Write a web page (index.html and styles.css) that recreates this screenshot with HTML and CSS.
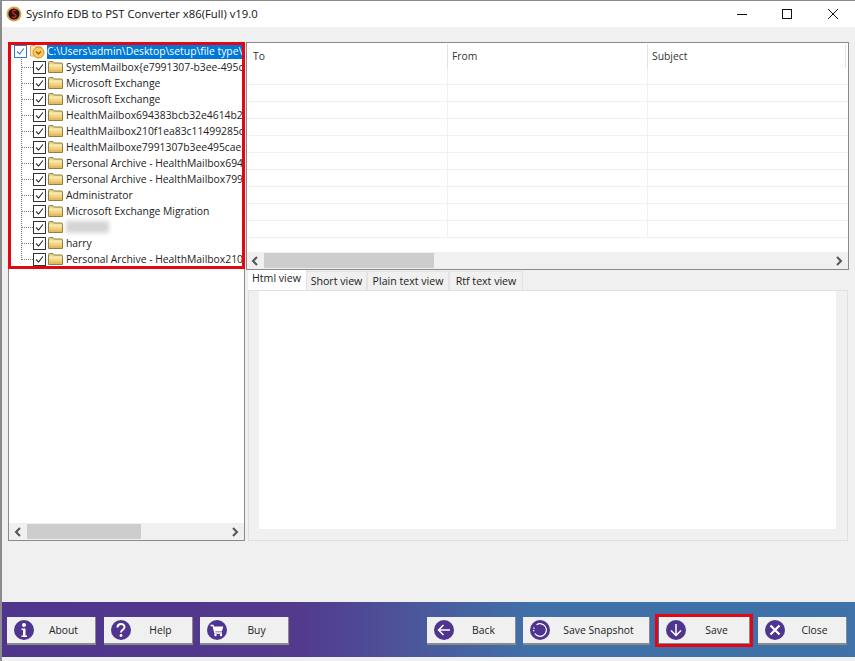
FILE: index.html
```html
<!DOCTYPE html>
<html lang="en">
<head>
<meta charset="utf-8">
<title>SysInfo EDB to PST Converter</title>
<link rel="stylesheet" href="styles.css">
</head>
<body>
<svg class="defs" width="0" height="0" aria-hidden="true">
  <defs>
    <linearGradient id="folder-fill" x1="0" y1="0" x2="0" y2="1"><stop offset="0" stop-color="#fdf1b8"/><stop offset="1" stop-color="#e4b44a"/></linearGradient>
    <symbol id="tick" viewBox="0 0 13 13"><path d="M2.500 6.500l3 3 5-6.500" fill="none" stroke="#222" stroke-width="1.300"/></symbol>
    <symbol id="folder" viewBox="0 0 15 12"><path d="M.5 11.500V1.500q0-1 1-1h3.500l1.500 1.500h7q1 0 1 1v8.500z" fill="#e9cf86" stroke="#8f8150"/><path d="M1 3.500h13v7.500H1z" fill="url(#folder-fill)"/></symbol>
  </defs>
</svg>
<div class="window">
  <header class="titlebar">
    <svg class="app-icon" viewBox="0 0 16 16"><circle cx="8" cy="8" r="7.500" fill="#d2a548"/><circle cx="8" cy="8" r="5.600" fill="#241210"/><path d="M10.400 4.800C8.600 3.800 6.200 4.600 6.600 6.400c.4 1.700 3.400 1.600 3.400 3.400 0 1.600-2 2-3.800 1.200" fill="none" stroke="#c8232c" stroke-width="1.500"/></svg>
    <span class="title">SysInfo EDB to PST Converter x86(Full) v19.0</span>
    <div class="win-controls">
      <svg class="win-btn" viewBox="0 0 46 26"><path d="M22 13.500h10" stroke="#111" fill="none"/></svg>
      <svg class="win-btn" viewBox="0 0 46 26"><rect x="21.500" y="8.500" width="9" height="9" stroke="#111" fill="none"/></svg>
      <svg class="win-btn" viewBox="0 0 46 26"><path d="M21 8l10 10M31 8L21 18" stroke="#111" fill="none"/></svg>
    </div>
  </header>
  <main class="workspace">
    <section class="tree-pane">
      <div class="tree-highlight"></div>
      <div class="tree">
        <div class="tree-root">
          <span class="check check-root"><svg viewBox="0 0 13 13"><path d="M2.500 6.500l3 3 5-6.500" fill="none" stroke="#2b7cc4" stroke-width="1.300"/></svg></span>
          <svg class="root-icon" viewBox="0 0 16 16"><path d="M1.500 13V4q0-1.500 1.500-1.500h3l1.500 1.500h5v9z" fill="#fbe6b4" stroke="#d9a95a"/><circle cx="9.500" cy="9.500" r="5.500" fill="#f8c85a" stroke="#d98c22"/><path d="M7 8.500l2.500 2.500 2.500-2.500" fill="none" stroke="#8a5a10" stroke-width="1.200"/></svg>
          <span class="root-label">C:\Users\admin\Desktop\setup\file type\</span>
        </div>
        <ul class="tree-list">
          <li class="tree-row"><span class="check"><svg viewBox="0 0 13 13"><use href="#tick"/></svg></span><svg class="folder"><use href="#folder"/></svg><span class="label">SystemMailbox{e7991307-b3ee-495c</span></li>
          <li class="tree-row"><span class="check"><svg viewBox="0 0 13 13"><use href="#tick"/></svg></span><svg class="folder"><use href="#folder"/></svg><span class="label">Microsoft Exchange</span></li>
          <li class="tree-row"><span class="check"><svg viewBox="0 0 13 13"><use href="#tick"/></svg></span><svg class="folder"><use href="#folder"/></svg><span class="label">Microsoft Exchange</span></li>
          <li class="tree-row"><span class="check"><svg viewBox="0 0 13 13"><use href="#tick"/></svg></span><svg class="folder"><use href="#folder"/></svg><span class="label">HealthMailbox694383bcb32e4614b2f</span></li>
          <li class="tree-row"><span class="check"><svg viewBox="0 0 13 13"><use href="#tick"/></svg></span><svg class="folder"><use href="#folder"/></svg><span class="label">HealthMailbox210f1ea83c11499285c</span></li>
          <li class="tree-row"><span class="check"><svg viewBox="0 0 13 13"><use href="#tick"/></svg></span><svg class="folder"><use href="#folder"/></svg><span class="label">HealthMailboxe7991307b3ee495caea</span></li>
          <li class="tree-row"><span class="check"><svg viewBox="0 0 13 13"><use href="#tick"/></svg></span><svg class="folder"><use href="#folder"/></svg><span class="label">Personal Archive - HealthMailbox694</span></li>
          <li class="tree-row"><span class="check"><svg viewBox="0 0 13 13"><use href="#tick"/></svg></span><svg class="folder"><use href="#folder"/></svg><span class="label">Personal Archive - HealthMailbox799</span></li>
          <li class="tree-row"><span class="check"><svg viewBox="0 0 13 13"><use href="#tick"/></svg></span><svg class="folder"><use href="#folder"/></svg><span class="label">Administrator</span></li>
          <li class="tree-row"><span class="check"><svg viewBox="0 0 13 13"><use href="#tick"/></svg></span><svg class="folder"><use href="#folder"/></svg><span class="label">Microsoft Exchange Migration</span></li>
          <li class="tree-row"><span class="check"><svg viewBox="0 0 13 13"><use href="#tick"/></svg></span><svg class="folder"><use href="#folder"/></svg><span class="blurred"></span></li>
          <li class="tree-row"><span class="check"><svg viewBox="0 0 13 13"><use href="#tick"/></svg></span><svg class="folder"><use href="#folder"/></svg><span class="label">harry</span></li>
          <li class="tree-row"><span class="check"><svg viewBox="0 0 13 13"><use href="#tick"/></svg></span><svg class="folder"><use href="#folder"/></svg><span class="label">Personal Archive - HealthMailbox210</span></li>
        </ul>
      </div>
      <div class="scrollbar tree-scroll">
        <svg class="arrow" viewBox="0 0 8 10"><path d="M6 1L2 5l4 4" fill="none" stroke="#555" stroke-width="2"/></svg>
        <div class="track"><div class="thumb thumb-tree"></div></div>
        <svg class="arrow" viewBox="0 0 8 10"><path d="M2 1l4 4-4 4" fill="none" stroke="#555" stroke-width="2"/></svg>
      </div>
    </section>
    <section class="right-pane">
      <div class="mail-list">
        <div class="mail-table">
          <div class="mail-header"><span class="col col-to">To</span><span class="col col-from">From</span><span class="col col-subject">Subject</span></div>
          <div class="mail-row"></div><div class="mail-row"></div><div class="mail-row"></div><div class="mail-row"></div><div class="mail-row"></div><div class="mail-row"></div><div class="mail-row"></div><div class="mail-row"></div><div class="mail-row"></div><div class="mail-row"></div>
        </div>
        <div class="scrollbar list-scroll">
          <svg class="arrow" viewBox="0 0 8 10"><path d="M6 1L2 5l4 4" fill="none" stroke="#555" stroke-width="2"/></svg>
          <div class="track"><div class="thumb thumb-list"></div></div>
          <svg class="arrow" viewBox="0 0 8 10"><path d="M2 1l4 4-4 4" fill="none" stroke="#555" stroke-width="2"/></svg>
        </div>
      </div>
      <nav class="tabs">
        <span class="tab tab-active">Html view</span>
        <span class="tab tab-short">Short view</span>
        <span class="tab tab-plain">Plain text view</span>
        <span class="tab tab-rtf">Rtf text view</span>
      </nav>
      <div class="tab-panel"><div class="preview"></div></div>
    </section>
  </main>
  <footer class="action-bar">
    <div class="btn-group">
      <button class="btn"><svg class="btn-icon" viewBox="0 0 20 20"><circle cx="10" cy="10" r="10" fill="#4f3590"/><circle cx="10" cy="5" r="2" fill="#fff"/><path d="M7.500 8.500h4v7h1.500v1.500H7.500v-1.500H9v-5.500H7.500z" fill="#fff"/></svg><span class="btn-label">About</span></button>
      <button class="btn btn-help"><svg class="btn-icon" viewBox="0 0 20 20"><circle cx="10" cy="10" r="10" fill="#4f3590"/><path d="M6.500 7.500C6.500 3 13.500 3 13.500 7c0 2.800-3.500 2.800-3.500 5.500" fill="none" stroke="#fff" stroke-width="2"/><circle cx="10" cy="15.500" r="1.400" fill="#fff"/></svg><span class="btn-label">Help</span></button>
      <button class="btn"><svg class="btn-icon" viewBox="0 0 20 20"><circle cx="10" cy="10" r="10" fill="#4f3590"/><path d="M3.500 5.500h2.500l2 7.500h7" fill="none" stroke="#fff" stroke-width="1.300"/><path d="M6.300 6.500h10l-1.500 5H7.600z" fill="#fff"/><circle cx="8.500" cy="15" r="1.200" fill="#fff"/><circle cx="14" cy="15" r="1.200" fill="#fff"/></svg><span class="btn-label">Buy</span></button>
    </div>
    <div class="btn-group">
      <button class="btn"><svg class="btn-icon" viewBox="0 0 20 20"><circle cx="10" cy="10" r="10" fill="#4f3590"/><path d="M16 10H4.500M9.500 5l-5 5 5 5" fill="none" stroke="#fff" stroke-width="1.500"/></svg><span class="btn-label">Back</span></button>
      <button class="btn btn-snapshot"><svg class="btn-icon" viewBox="0 0 20 20"><circle cx="10" cy="10" r="10" fill="#4f3590"/><path d="M6.500 4.800A6.300 6.300 0 1 1 4.800 13.500" fill="none" stroke="#fff" stroke-width="1.200"/><path d="M4.200 7.500a6.300 6.300 0 0 0-.4 4" fill="none" stroke="#fff" stroke-width="1.200" stroke-dasharray="1.500 1"/></svg><span class="btn-label">Save Snapshot</span></button>
      <button class="btn btn-save"><svg class="btn-icon" viewBox="0 0 20 20"><circle cx="10" cy="10" r="10" fill="#4f3590"/><path d="M10 4v11.500M5 10.500l5 5 5-5" fill="none" stroke="#fff" stroke-width="1.500"/></svg><span class="btn-label">Save</span></button>
      <button class="btn"><svg class="btn-icon" viewBox="0 0 20 20"><circle cx="10" cy="10" r="10" fill="#4f3590"/><path d="M5.500 5.500l9 9M14.500 5.500l-9 9" fill="none" stroke="#fff" stroke-width="2.200"/></svg><span class="btn-label">Close</span></button>
    </div>
  </footer>
</div>
</body>
</html>
```
FILE: styles.css
```css
* { box-sizing: border-box; }
html, body { margin: 0; padding: 0; }
body {
  width: 855px;
  height: 661px;
  overflow: hidden;
  background: #f0f0f0;
  font-family: "Open Sans", "Noto Sans", sans-serif;
  font-size: 10.35px;
  color: #1a1a1a;
}
.defs { display: block; height: 0; }
.window {
  width: 855px;
  height: 661px;
  display: flex;
  flex-direction: column;
  border-top: 1px solid #8c8c8c;
  border-left: 2px solid #8c8c8c;
}
.titlebar {
  height: 26px;
  flex: none;
  background: #fff;
  display: flex;
  align-items: center;
  padding-left: 4px;
}
.app-icon { width: 16px; height: 16px; flex: none; }
.title { margin: 0 0 2px 4px; font-size: 11.3px; color: #111; }
.win-controls { margin-left: auto; display: flex; margin-right: 2px; }
.win-btn { width: 46px; height: 26px; display: block; }

.workspace {
  flex: 1;
  min-height: 0;
  display: flex;
  padding: 15px 6px 0 6px;
}
.tree-pane {
  position: relative;
  width: 237px;
  height: 499px;
  flex: none;
  background: #fff;
  border: 1px solid #8a8a8a;
  display: flex;
  flex-direction: column;
}
.tree-highlight {
  position: absolute;
  left: -1px;
  top: -1px;
  width: 237px;
  height: 227px;
  border: 3px solid #e30613;
  z-index: 2;
  pointer-events: none;
}
.tree {
  flex: 1;
  min-height: 0;
  overflow: hidden;
  padding: 0 0 0 4px;
  position: relative;
}
.tree-root { height: 16px; display: flex; align-items: center; white-space: nowrap; }
.check {
  width: 13px;
  height: 13px;
  flex: none;
  border: 1px solid #333;
  background: #fff;
  display: block;
}
.check svg { display: block; width: 11px; height: 11px; }
.check-root { border-color: #2b7cc4; margin-left: 1px; }
.root-icon { width: 16px; height: 16px; margin-left: 2px; flex: none; }
.root-label {
  background: #0078d7;
  color: #fff;
  margin-left: 2px;
  height: 15px;
  line-height: 15px;
  white-space: nowrap;
}
.tree-list {
  list-style: none;
  margin: 0 0 0 8px;
  padding: 0;
  border-left: 1px dotted #777;
  width: 240px;
  height: 201px;
}
.tree-row {
  height: 16px;
  display: flex;
  align-items: center;
  padding-left: 11px;
  white-space: nowrap;
  position: relative;
}
.tree-row::before {
  content: "";
  position: absolute;
  left: 0;
  top: 8px;
  width: 11px;
  border-top: 1px dotted #777;
}
.folder { width: 15px; height: 12px; margin-left: 2px; flex: none; }
.label { margin-left: 3px; color: #222; }
.blurred {
  display: block;
  width: 43px;
  height: 12px;
  margin-left: 3px;
  background: #d4d4d4;
  filter: blur(2px);
}

.scrollbar {
  height: 17px;
  flex: none;
  background: #f0f0f0;
  display: flex;
  align-items: center;
}
.arrow { width: 8px; height: 10px; margin: 0 5px; flex: none; }
.list-scroll .arrow:first-child { margin-left: 4px; }
.track { flex: 1; height: 15px; }
.thumb { height: 15px; background: #cdcdcd; }
.thumb-tree { width: 114px; }
.thumb-list { width: 170px; }

.right-pane {
  flex: none;
  width: 603px;
  margin-left: 1px;
  display: flex;
  flex-direction: column;
}
.mail-list {
  height: 228px;
  flex: none;
  background: #fff;
  border: 1px solid #8a8a8a;
  display: flex;
  flex-direction: column;
}
.mail-table { flex: 1; min-height: 0; overflow: hidden; }
.mail-header { height: 25px; display: flex; padding-top: 1px; }
.col { padding: 5px 0 0 4px; border-right: 1px solid #e2e2e2; color: #333; }
.col-to { width: 201px; padding-left: 6px; }
.col-from { width: 200px; }
.col-subject { width: 198px; }
.mail-row {
  height: 17px;
  border-bottom: 1px solid #f0f0f0;
  background:
    linear-gradient(#f0f0f0, #f0f0f0) 200px 0 / 1px 100% no-repeat,
    linear-gradient(#f0f0f0, #f0f0f0) 400px 0 / 1px 100% no-repeat;
}
.tabs {
  flex: none;
  height: 20px;
  display: flex;
  align-items: flex-end;
  padding-left: 2px;
  font-size: 10.6px;
}
.tab {
  height: 19px;
  padding-top: 2px;
  text-align: center;
  background: #f0f0f0;
  border: 1px solid #e3e3e3;
  border-bottom: 0;
  color: #222;
}
.tab-active {
  width: 58px;
  height: 20px;
  padding: 0 0 0 3px;
  text-align: left;
  background: #fff;
  border-color: #fff;
}
.tab-short { width: 61px; }
.tab-plain { width: 82px; }
.tab-rtf { width: 74px; }
.tab-panel {
  width: 600px;
  margin-left: 2px;
  height: 251px;
  border: 1px solid #e0e0e0;
  padding: 0 11px 11px 10px;
  background: #f0f0f0;
}
.preview { height: 100%; background: #fff; }

.action-bar {
  flex: none;
  height: 55px;
  margin-bottom: 4px;
  background: linear-gradient(90deg, #4f358c 0%, #533a8d 35%, #4a5a9d 50%, #4070a8 62%, #3e72a9 100%);
  display: flex;
  justify-content: space-between;
  padding: 15px 8px 0 5px;
}
.btn-group { display: flex; gap: 7px; }
.btn {
  width: 89px;
  height: 28px;
  padding: 0 2px 0 7px;
  background: #f0f0f0;
  border: 0;
  border-right: 1px solid #8a8a8a;
  border-bottom: 2px solid #8a8a8a;
  display: flex;
  align-items: center;
  font: inherit;
  color: #222;
  position: relative;
}
.btn-help { margin-left: 1px; }
.btn-icon { width: 20px; height: 20px; flex: none; }
.btn-label { flex: 1; text-align: center; }
.btn-snapshot { width: 127px; }
.btn-save { width: 91px; margin: 0 1px 0 2px; }
.btn-save::after {
  content: "";
  position: absolute;
  left: -4px;
  top: -3px;
  right: -4px;
  bottom: -4px;
  border: 3px solid #e30613;
}
```
